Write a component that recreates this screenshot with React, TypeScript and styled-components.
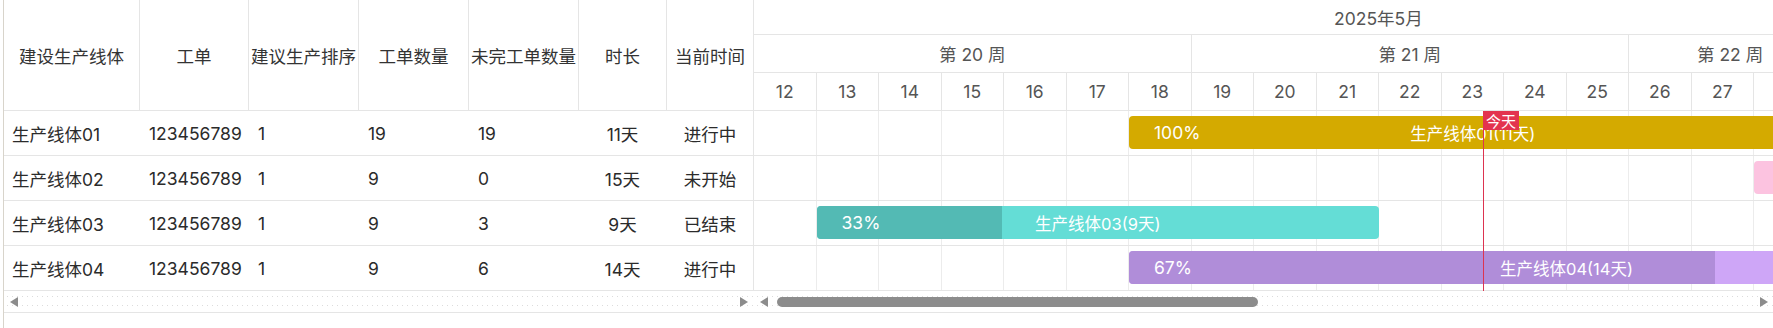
import React from "react";
import styled, { createGlobalStyle } from "styled-components";

const LINE = "#e5e5e5";
const DAY_W = 62.5;

const GlobalStyle = createGlobalStyle`
  html, body { margin: 0; padding: 0; background: #fff; }
  body { font-family: Inter, "Noto Sans CJK SC", sans-serif; color: #333; }
  * { box-sizing: border-box; }
`;

const Frame = styled.div`
  display: flex;
  width: 1770px;
  height: 328px;
  margin-left: 3px;
  border-left: 1px solid #d8d4cb;
  overflow: hidden;
  background: #fff;
`;

const TablePanel = styled.div`
  flex: 0 0 750px;
  display: flex;
  flex-direction: column;
`;

const COLS = "136px 109px 110px 110px 110px 88px 87px";

const HeaderRow = styled.div`
  display: grid;
  grid-template-columns: ${COLS};
  height: 111px;
  border-bottom: 1px solid ${LINE};
`;

const HeadCell = styled.div`
  display: flex;
  align-items: center;
  justify-content: center;
  font-size: 17.5px;
  color: #333;
  white-space: nowrap;
  border-right: 1px solid ${LINE};
`;

const DataRow = styled.div`
  display: grid;
  grid-template-columns: ${COLS};
  height: 45px;
  border-bottom: 1px solid ${LINE};
`;

const Cell = styled.div<{ $center?: boolean; $last?: boolean; $pad?: number }>`
  display: flex;
  align-items: center;
  justify-content: ${(p) => (p.$center ? "center" : "flex-start")};
  padding-left: ${(p) => (p.$center ? 0 : p.$pad ?? 9)}px;
  font-size: 17.5px;
  color: #2b2b2b;
  white-space: nowrap;
  border-right: 1px solid ${(p) => (p.$last ? LINE : "transparent")};
`;

const ScrollRow = styled.div`
  position: relative;
  display: flex;
  align-items: center;
  justify-content: space-between;
  height: 22px;
  border-bottom: 1px solid ${LINE};
  padding: 0 6px 0 6px;
  background-image: radial-gradient(circle, #dcdcdc 0.75px, transparent 1px);
  background-size: 5px 9px;
  background-position: 1px 1px;
`;

const Arrow = styled.span<{ $dir: "left" | "right" }>`
  width: 0;
  height: 0;
  border-top: 5px solid transparent;
  border-bottom: 5px solid transparent;
  ${(p) =>
    p.$dir === "left"
      ? "border-right: 8px solid #8c8c8c;"
      : "border-left: 8px solid #8c8c8c;"}
`;

const Thumb = styled.div`
  height: 10px;
  width: 481px;
  border-radius: 5px;
  background: #8c8c8c;
  margin-left: 9px;
`;

const ThumbGroup = styled.div`
  display: flex;
  align-items: center;
`;

const GanttPanel = styled.div`
  flex: 0 0 1019px;
  width: 1019px;
  display: flex;
  flex-direction: column;
  overflow: hidden;
`;

const MonthRow = styled.div`
  height: 35px;
  border-bottom: 1px solid ${LINE};
  display: flex;
  align-items: center;
  padding-left: 580px;
  font-size: 17.5px;
  color: #555;
  white-space: nowrap;
`;

const WeekRow = styled.div`
  display: flex;
  height: 38px;
  border-bottom: 1px solid ${LINE};
`;

const WeekCell = styled.div<{ $days: number; $pad?: number }>`
  flex: 0 0 ${(p) => p.$days * DAY_W}px;
  display: flex;
  align-items: center;
  justify-content: ${(p) => (p.$pad !== undefined ? "flex-start" : "center")};
  padding-left: ${(p) => p.$pad ?? 0}px;
  border-right: 1px solid ${LINE};
  font-size: 17.5px;
  color: #555;
  white-space: nowrap;
`;

const DayRow = styled.div`
  display: flex;
  height: 38px;
  border-bottom: 1px solid ${LINE};
`;

const DayCell = styled.div`
  flex: 0 0 ${DAY_W}px;
  display: flex;
  align-items: center;
  justify-content: center;
  border-right: 1px solid ${LINE};
  font-size: 17.5px;
  color: #555;
`;

const Body = styled.div`
  position: relative;
`;

const GridRow = styled.div`
  position: relative;
  display: flex;
  height: 45px;
  border-bottom: 1px solid ${LINE};
`;

const GridCell = styled.div`
  flex: 0 0 ${DAY_W}px;
  border-right: 1px solid #ececec;
`;

const Bar = styled.div<{ $bg: string }>`
  position: absolute;
  top: 5px;
  height: 33px;
  display: flex;
  border-radius: 4px;
  overflow: hidden;
  background: ${(p) => p.$bg};
`;

const Fill = styled.div<{ $bg: string }>`
  height: 100%;
  display: flex;
  align-items: center;
  padding-left: 25px;
  background: ${(p) => p.$bg};
  color: #fff;
  font-size: 17.5px;
  white-space: nowrap;
`;

const BarLabel = styled.div`
  position: absolute;
  inset: 0;
  display: flex;
  align-items: center;
  justify-content: center;
  color: #fff;
  font-size: 16.5px;
  white-space: nowrap;
  pointer-events: none;
`;

const TodayLine = styled.div`
  position: absolute;
  top: 0;
  bottom: 0;
  width: 1px;
  background: #dd3350;
  z-index: 3;
`;

const TodayTag = styled.div`
  position: absolute;
  top: 0;
  left: 0;
  height: 19px;
  padding: 0 3px;
  display: flex;
  align-items: center;
  background: #e3334f;
  color: #fff;
  font-size: 15px;
  white-space: nowrap;
`;

const GanttScroll = styled(ScrollRow)`
  padding: 0 5px 0 6px;
`;

type Row = {
  line: string;
  order: string;
  seq: string;
  qty: string;
  left: string;
  dur: string;
  status: string;
  start: number;
  days: number;
  progress: number;
  dark: string;
  light: string;
};

const rows: Row[] = [
  { line: "生产线体01", order: "123456789", seq: "1", qty: "19", left: "19", dur: "11天", status: "进行中", start: 6, days: 11, progress: 100, dark: "#d4aa00", light: "#f0d04a" },
  { line: "生产线体02", order: "123456789", seq: "1", qty: "9", left: "0", dur: "15天", status: "未开始", start: 16, days: 15, progress: 0, dark: "#f58ec4", light: "#fcc3e0" },
  { line: "生产线体03", order: "123456789", seq: "1", qty: "9", left: "3", dur: "9天", status: "已结束", start: 1, days: 9, progress: 33, dark: "#53bab4", light: "#64ddd6" },
  { line: "生产线体04", order: "123456789", seq: "1", qty: "9", left: "6", dur: "14天", status: "进行中", start: 6, days: 14, progress: 67, dark: "#b08dd9", light: "#cea6f7" },
];

const days = Array.from({ length: 17 }, (_, i) => 12 + i);
const headers = ["建设生产线体", "工单", "建议生产排序", "工单数量", "未完工单数量", "时长", "当前时间"];

export default function App() {
  return (
    <>
      <GlobalStyle />
      <Frame>
        <TablePanel>
          <HeaderRow>
            {headers.map((h) => (
              <HeadCell key={h}>{h}</HeadCell>
            ))}
          </HeaderRow>
          {rows.map((r) => (
            <DataRow key={r.line}>
              <Cell $pad={8}>{r.line}</Cell>
              <Cell>{r.order}</Cell>
              <Cell>{r.seq}</Cell>
              <Cell>{r.qty}</Cell>
              <Cell>{r.left}</Cell>
              <Cell $center>{r.dur}</Cell>
              <Cell $center $last>{r.status}</Cell>
            </DataRow>
          ))}
          <ScrollRow>
            <Arrow $dir="left" />
            <Arrow $dir="right" />
          </ScrollRow>
        </TablePanel>
        <GanttPanel>
          <MonthRow>2025年5月</MonthRow>
          <WeekRow>
            <WeekCell $days={7}>第 20 周</WeekCell>
            <WeekCell $days={7}>第 21 周</WeekCell>
            <WeekCell $days={7} $pad={68}>第 22 周</WeekCell>
          </WeekRow>
          <DayRow>
            {days.map((d) => (
              <DayCell key={d}>{d}</DayCell>
            ))}
          </DayRow>
          <Body>
            {rows.map((r) => (
              <GridRow key={r.line}>
                {days.map((d) => (
                  <GridCell key={d} />
                ))}
                <Bar $bg={r.light} style={{ left: r.start * DAY_W, width: r.days * DAY_W }}>
                  {r.progress > 0 && (
                    <Fill $bg={r.dark} style={{ width: (r.days * DAY_W * r.progress) / 100 }}>
                      {r.progress}%
                    </Fill>
                  )}
                  <BarLabel>{`${r.line}(${r.days}天)`}</BarLabel>
                </Bar>
              </GridRow>
            ))}
            <TodayLine style={{ left: 729 }}>
              <TodayTag>今天</TodayTag>
            </TodayLine>
          </Body>
          <GanttScroll>
            <ThumbGroup>
              <Arrow $dir="left" />
              <Thumb />
            </ThumbGroup>
            <Arrow $dir="right" />
          </GanttScroll>
        </GanttPanel>
      </Frame>
    </>
  );
}
